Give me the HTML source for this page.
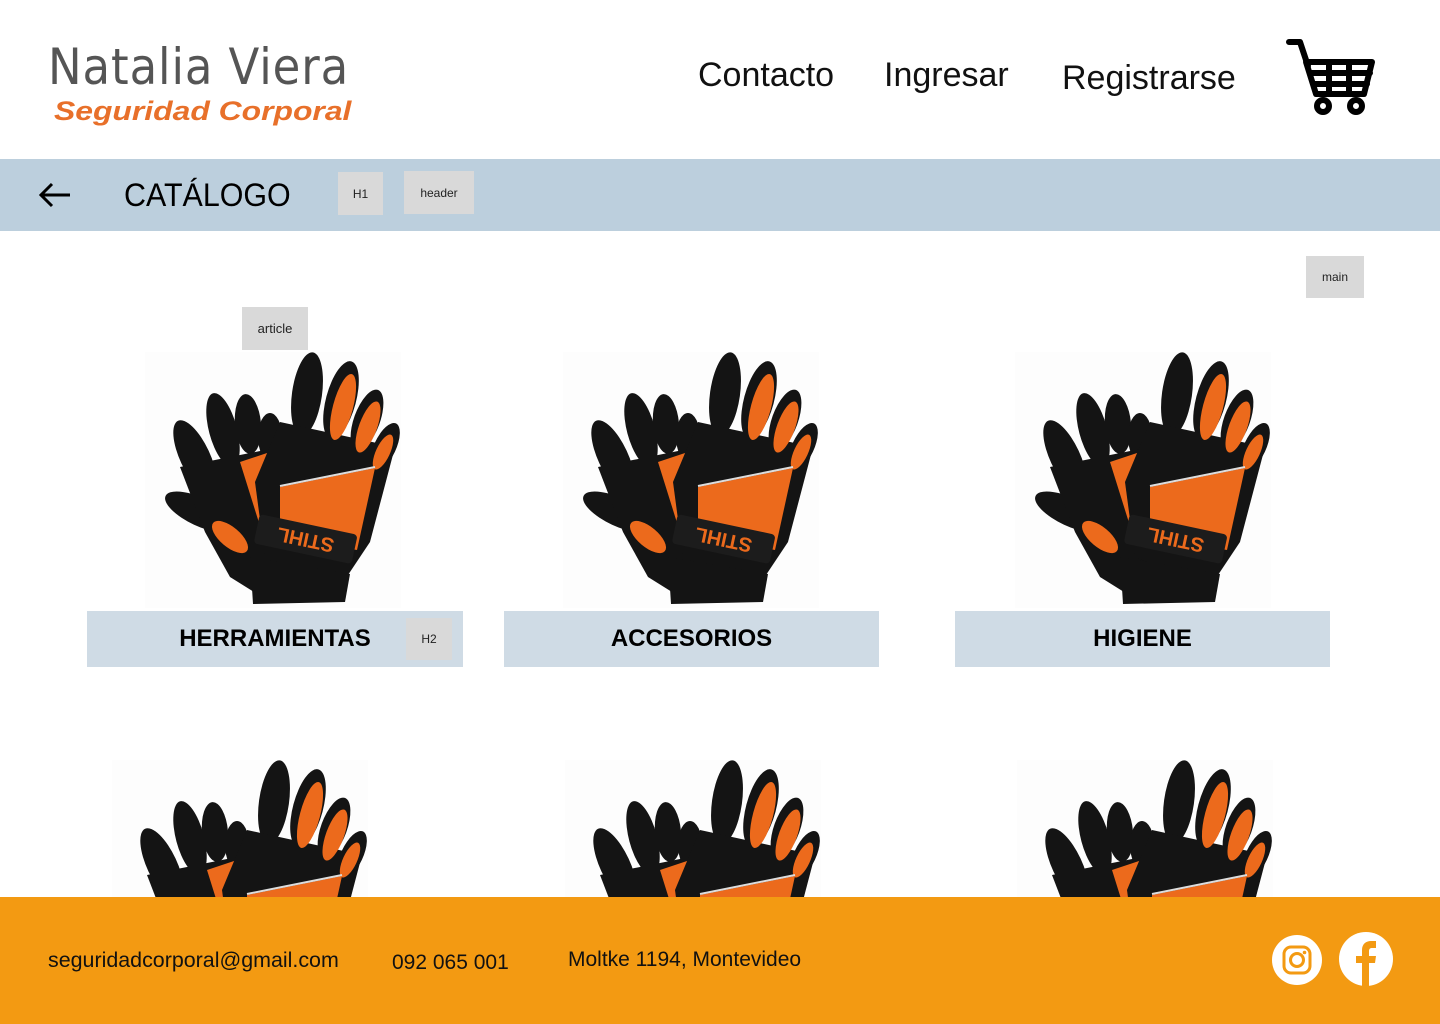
<!DOCTYPE html>
<html><head><meta charset="utf-8"><style>
*{margin:0;padding:0;box-sizing:border-box}
body{width:1440px;height:1024px;overflow:hidden;background:#fff;font-family:"Liberation Sans",sans-serif;position:relative;color:#000}
.a{position:absolute}
.tag{position:absolute;background:#d9d9d9;font-size:12px;display:flex;align-items:center;justify-content:center;color:#222}
.nav{position:absolute;font-size:34px;color:#111}
.bar{position:absolute;background:#cfdbe5;height:56px;top:611px;font-weight:bold;font-size:24px;display:flex;align-items:center;justify-content:center}
.img{position:absolute;width:256px;height:256px;background:#fdfdfd}
.foot{position:absolute;font-size:21px;color:#111}
</style></head><body>
<svg width="0" height="0" style="position:absolute">
<defs>
<symbol id="g" viewBox="0 0 256 256">
<g fill="#141414">
<ellipse cx="50" cy="105" rx="15" ry="40" transform="rotate(-25 50 105)"/>
<ellipse cx="78" cy="78" rx="14" ry="38" transform="rotate(-15 78 78)"/>
<ellipse cx="103" cy="72" rx="13" ry="30" transform="rotate(-5 103 72)"/>
<ellipse cx="125" cy="85" rx="12" ry="24"/>
<ellipse cx="55" cy="160" rx="38" ry="14" transform="rotate(25 55 160)"/>
<path d="M35 115 L135 95 L160 210 L125 250 L85 225 L60 180 Z"/>
</g>
<ellipse cx="85" cy="185" rx="22" ry="10" fill="#ec6a1c" transform="rotate(40 85 185)"/>
<path d="M95 110 L125 100 L140 185 L120 190 Z" fill="#ec6a1c"/>
<g fill="#141414">
<ellipse cx="162" cy="42" rx="15" ry="42" transform="rotate(8 162 42)"/>
<ellipse cx="196" cy="48" rx="15" ry="40" transform="rotate(15 196 48)"/>
<ellipse cx="222" cy="68" rx="13" ry="32" transform="rotate(20 222 68)"/>
<ellipse cx="240" cy="95" rx="11" ry="26" transform="rotate(25 240 95)"/>
<path d="M135 70 L250 95 L225 190 L195 235 L120 205 L110 130 Z"/>
</g>
<g fill="#ec6a1c">
<ellipse cx="198" cy="55" rx="10" ry="34" transform="rotate(15 198 55)"/>
<ellipse cx="223" cy="75" rx="9" ry="27" transform="rotate(20 223 75)"/>
<ellipse cx="238" cy="100" rx="7" ry="19" transform="rotate(25 238 100)"/>
<path d="M135 135 L230 116 L212 198 L135 185 Z"/>
</g>
<path d="M135 134 L230 115" stroke="#ddd" stroke-width="2"/>
<g transform="rotate(12 160 190)">
<rect x="110" y="172" width="100" height="30" rx="4" fill="#1c1c1c"/>
<text x="160" y="193" font-family="Liberation Sans" font-weight="bold" font-size="20" fill="#ec6a1c" text-anchor="middle" transform="rotate(180 160 187)">STIHL</text>
</g>
<path d="M105 205 L205 222 L200 250 L108 252 Z" fill="#141414"/>
</symbol>
</defs>
</svg>

<div class="a" style="left:48px;top:38px;font-size:50px;color:#555;letter-spacing:1px;font-family:'DejaVu Sans',sans-serif;transform:scaleX(0.9);transform-origin:left">Natalia Viera</div>
<div class="a" style="left:54px;top:96px;font-size:27px;color:#e8702a;font-weight:bold;font-style:italic;transform:scaleX(1.18);transform-origin:left">Seguridad Corporal</div>

<div class="nav" style="left:698px;top:56px">Contacto</div>
<div class="nav" style="left:884px;top:56px">Ingresar</div>
<div class="nav" style="left:1062px;top:59px">Registrarse</div>

<svg class="a" style="left:1286px;top:38px" width="92" height="80" viewBox="0 0 92 80">
<g fill="none" stroke="#000" stroke-width="6" stroke-linejoin="round" stroke-linecap="round">
<path d="M3 4 H14 L22 28"/>
<path d="M20 24 H86 L78 56 H30 Z"/>
<path d="M24 35 H84 M27 46 H81 M43 24 V56 M63 24 V56"/>
<circle cx="37" cy="68" r="6"/><circle cx="70" cy="68" r="6"/>
</g>
</svg>

<div class="a" style="left:0;top:159px;width:1440px;height:72px;background:#bccfdd"></div>
<svg class="a" style="left:38px;top:182px" width="34" height="26" viewBox="0 0 34 26"><path d="M32 13 H3 M14 2 L3 13 L14 24" fill="none" stroke="#000" stroke-width="3"/></svg>
<div class="a" style="left:124px;top:177px;font-size:32px;transform:scaleX(0.95);transform-origin:left">CATÁLOGO</div>
<div class="tag" style="left:338px;top:172px;width:45px;height:43px">H1</div>
<div class="tag" style="left:404px;top:171px;width:70px;height:43px">header</div>

<div class="tag" style="left:1306px;top:256px;width:58px;height:42px">main</div>
<div class="tag" style="left:242px;top:307px;width:66px;height:43px;font-size:13px">article</div>

<svg class="img" style="left:145px;top:352px"><use href="#g"/></svg>
<svg class="img" style="left:563px;top:352px"><use href="#g"/></svg>
<svg class="img" style="left:1015px;top:352px"><use href="#g"/></svg>

<div class="bar" style="left:87px;width:376px">HERRAMIENTAS</div>
<div class="tag" style="left:406px;top:618px;width:46px;height:42px">H2</div>
<div class="bar" style="left:504px;width:375px">ACCESORIOS</div>
<div class="bar" style="left:955px;width:375px">HIGIENE</div>

<svg class="img" style="left:112px;top:760px"><use href="#g"/></svg>
<svg class="img" style="left:565px;top:760px"><use href="#g"/></svg>
<svg class="img" style="left:1017px;top:760px"><use href="#g"/></svg>

<div class="a" style="left:0;top:897px;width:1440px;height:127px;background:#f39a12"></div>
<div class="foot" style="left:48px;top:949px;transform:scaleX(1.02);transform-origin:left">seguridadcorporal@gmail.com</div>
<div class="foot" style="left:392px;top:951px">092 065 001</div>
<div class="foot" style="left:568px;top:948px">Moltke 1194, Montevideo</div>

<svg class="a" style="left:1272px;top:934px" width="52" height="52" viewBox="0 0 52 52">
<circle cx="25" cy="26" r="25" fill="#fff"/>
<rect x="12" y="13" width="26" height="26" rx="7" fill="none" stroke="#f39a12" stroke-width="3"/>
<circle cx="25" cy="26" r="6.5" fill="none" stroke="#f39a12" stroke-width="3"/>
<circle cx="32.5" cy="18.5" r="1.8" fill="#f39a12"/>
</svg>
<svg class="a" style="left:1339px;top:932px" width="56" height="56" viewBox="0 0 56 56">
<circle cx="27" cy="27" r="27" fill="#fff"/>
<path d="M23 54 V31 H17 V24 H23 V18 C23 12 27 9 32 9 H37 V16 H33 C31 16 30 17 30 19 V24 H37 L36 31 H30 V54 Z" fill="#f39a12"/>
</svg>
</body></html>
